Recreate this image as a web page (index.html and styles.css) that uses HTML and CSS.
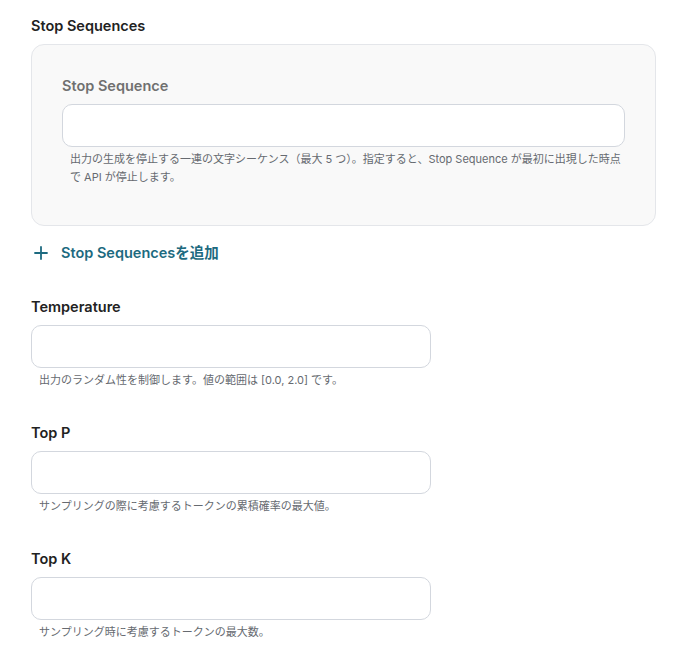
FILE: index.html
```html
<!DOCTYPE html>
<html lang="ja">
<head>
<meta charset="utf-8">
<title>Model Settings</title>
<link rel="stylesheet" href="styles.css">
</head>
<body>
<main class="form">
  <section class="field">
    <h3 class="field-label">Stop Sequences</h3>
    <div class="panel">
      <label class="sub-label">Stop Sequence</label>
      <input class="text-input" type="text">
      <p class="help">出力の生成を停止する一連の文字シーケンス（最大 5 つ）。指定すると、Stop Sequence が最初に出現した時点で API が停止します。</p>
    </div>
    <button class="add-btn" type="button">
      <svg class="plus" width="14" height="14" viewBox="0 0 14 14" aria-hidden="true">
        <path d="M7 1v12M1 7h12" stroke="currentColor" stroke-width="1.8" stroke-linecap="round"/>
      </svg>
      <span>Stop Sequencesを追加</span>
    </button>
  </section>

  <section class="field">
    <h3 class="field-label">Temperature</h3>
    <input class="text-input narrow" type="text">
    <p class="help">出力のランダム性を制御します。値の範囲は [0.0, 2.0] です。</p>
  </section>

  <section class="field">
    <h3 class="field-label">Top P</h3>
    <input class="text-input narrow" type="text">
    <p class="help">サンプリングの際に考慮するトークンの累積確率の最大値。</p>
  </section>

  <section class="field">
    <h3 class="field-label">Top K</h3>
    <input class="text-input narrow" type="text">
    <p class="help">サンプリング時に考慮するトークンの最大数。</p>
  </section>
</main>
</body>
</html>
```

FILE: styles.css
```css
* {
  box-sizing: border-box;
}

body {
  margin: 0;
  background: #ffffff;
  font-family: Inter, "Noto Sans CJK JP", sans-serif;
  color: #222222;
}

.form {
  display: flex;
  flex-direction: column;
  gap: 34px;
  padding: 16px 31px 0 31px;
  width: 687px;
}

.field {
  display: flex;
  flex-direction: column;
}

.field-label {
  margin: 0 0 8px 0;
  font-size: 14.5px;
  line-height: 20px;
  font-weight: 600;
  color: #222222;
}

.panel {
  display: flex;
  flex-direction: column;
  background: #f9f9f9;
  border: 1px solid #e4e6ea;
  border-radius: 13px;
  padding: 31px 30px 39px 30px;
}

.sub-label {
  display: block;
  margin-bottom: 8px;
  font-size: 14.5px;
  line-height: 20px;
  font-weight: 600;
  color: #707070;
}

.text-input {
  display: block;
  width: 100%;
  height: 43px;
  border: 1px solid #d3d7de;
  border-radius: 10px;
  background: #ffffff;
  font: inherit;
  padding: 0 12px;
  outline: none;
}

.text-input.narrow {
  width: 400px;
}

.help {
  margin: 3px 0 0 0;
  padding: 0 0 0 8px;
  font-size: 11px;
  line-height: 18px;
  color: #666a70;
}

.add-btn {
  margin-top: 17px;
  align-self: flex-start;
  display: flex;
  align-items: center;
  gap: 13px;
  padding: 0 0 0 3px;
  border: none;
  background: none;
  font-family: inherit;
  font-size: 14.5px;
  line-height: 20px;
  font-weight: 600;
  color: #1d6a80;
  cursor: pointer;
}

.plus {
  display: block;
}
```
